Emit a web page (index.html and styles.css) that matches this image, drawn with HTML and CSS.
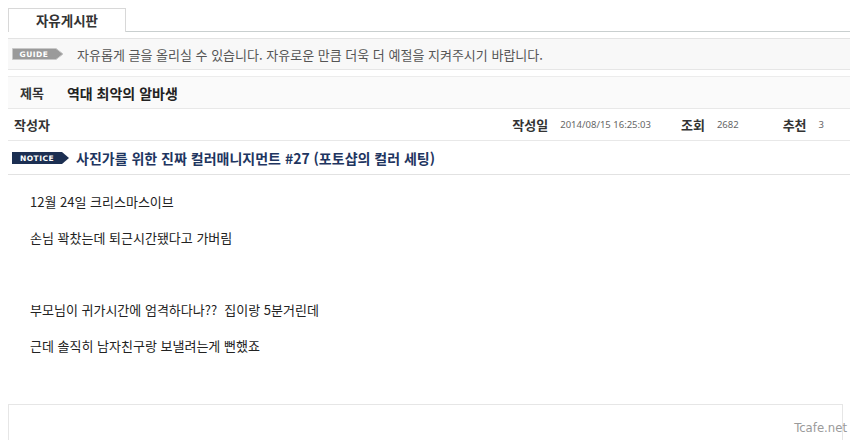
FILE: index.html
```html
<!DOCTYPE html>
<html lang="ko">
<head>
  <meta charset="UTF-8">
  <title>자유게시판</title>
  <link rel="stylesheet" href="styles.css">
</head>
<body>

  <!-- 탭 -->
  <div class="tabs">
    <div class="tab">자유게시판</div>
    <div class="tab-rest"></div>
  </div>

  <!-- 안내 -->
  <div class="guide">
    <svg class="badge" width="52" height="12" viewBox="0 0 52 12">
      <polygon points="0.5,0.5 44,0.5 51,6 44,11.5 0.5,11.5" fill="#9a9a9a" stroke="#c8c8c8"/>
      <text x="22" y="9" text-anchor="middle" fill="#fff" font-family="DejaVu Sans, sans-serif" font-size="7.5" font-weight="bold" letter-spacing="0.5">GUIDE</text>
    </svg>
    <span>자유롭게 글을 올리실 수 있습니다. 자유로운 만큼 더욱 더 예절을 지켜주시기 바랍니다.</span>
  </div>

  <!-- 글 정보 -->
  <div class="row title-row">
    <span class="label">제목</span>
    <span class="subject">역대 최악의 알바생</span>
  </div>

  <div class="row info-row">
    <span class="label">작성자</span>
    <div class="meta">
      <span class="label">작성일</span><span class="val date">2014/08/15 16:25:03</span>
      <span class="label">조회</span><span class="val hits">2682</span>
      <span class="label">추천</span><span class="val">3</span>
    </div>
  </div>

  <div class="row notice-row">
    <svg class="badge" width="58" height="12" viewBox="0 0 58 12">
      <polygon points="0,0 50,0 57,6 50,12 0,12" fill="#1c2f52"/>
      <text x="25" y="9" text-anchor="middle" fill="#fff" font-family="DejaVu Sans, sans-serif" font-size="7.5" font-weight="bold" letter-spacing="0.5">NOTICE</text>
    </svg>
    <a class="notice-link" href="#">사진가를 위한 진짜 컬러매니지먼트 #27 (포토샵의 컬러 세팅)</a>
  </div>

  <!-- 본문 -->
  <div class="content">
    <p>12월 24일 크리스마스이브</p>
    <p>손님 꽉찼는데 퇴근시간됐다고 가버림</p>
    <p>&nbsp;</p>
    <p>부모님이 귀가시간에 엄격하다나??&nbsp; 집이랑 5분거린데</p>
    <p>근데 솔직히 남자친구랑 보낼려는게 뻔했죠</p>
  </div>

  <div class="comment-box"></div>

  <div class="watermark">Tcafe.net</div>

</body>
</html>
```

FILE: styles.css
```css
body {
  margin: 0;
  padding: 8px 0 0 8px;
  font-family: "Noto Sans CJK KR", "Noto Sans", sans-serif;
  font-size: 13px;
  color: #222;
  background: #fff;
  overflow: hidden;
  height: 440px;
  box-sizing: border-box;
  position: relative;
}

/* Tabs */
.tabs {
  display: flex;
  height: 24px;
}

.tab {
  width: 116px;
  border: 1px solid #d8d8d8;
  border-bottom: none;
  text-align: center;
  font-weight: bold;
  font-size: 13.5px;
  line-height: 22px;
  color: #333;
}

.tab-rest {
  flex: 1;
  border-bottom: 1px solid #c9cfcf;
}

/* Guide */
.guide {
  display: flex;
  align-items: center;
  gap: 13px;
  margin-top: 6px;
  height: 30px;
  padding-left: 4px;
  background: #f8f8f8;
  border-top: 1px solid #e3e3e3;
  border-bottom: 1px solid #e6e6e6;
  color: #555;
}

.badge {
  display: block;
  flex: none;
}

/* Rows */
.row {
  display: flex;
  align-items: center;
  border-bottom: 1px solid #e8e8e8;
}

.label {
  font-weight: bold;
  color: #333;
}

.title-row {
  margin-top: 6px;
  height: 31px;
  padding-left: 12px;
  background: #fafafa;
  border-top: 1px solid #ececec;
}

.title-row .subject {
  margin-left: 23px;
  font-weight: bold;
  font-size: 14px;
  color: #222;
}

.info-row {
  height: 31px;
  padding-left: 6px;
}

.meta {
  margin-left: auto;
  display: flex;
  align-items: center;
}

.meta .val {
  font-family: "Noto Sans", sans-serif;
  font-size: 9.5px;
  color: #666;
  margin-left: 12px;
}

.meta .date { margin-right: 30px; }
.meta .hits { margin-right: 44px; }
.meta .val:last-child { margin-right: 26px; }

.notice-row {
  height: 33px;
  padding-left: 4px;
  gap: 6px;
  border-bottom: 1px solid #e2e2e2;
}

.notice-link {
  font-weight: bold;
  font-size: 14px;
  color: #1e3560;
  text-decoration: none;
}

/* Content */
.content {
  padding: 17px 0 0 22px;
  height: 212px;
}

.content p {
  margin: 0;
  height: 36px;
  line-height: 20px;
}

.comment-box {
  margin-right: 7px;
  height: 40px;
  border: 1px solid #e6e6e6;
  border-bottom: none;
}

.watermark {
  position: absolute;
  right: 3px;
  bottom: 5px;
  font-family: "Liberation Sans Narrow", "DejaVu Sans Condensed", sans-serif;
  font-size: 13px;
  color: #9a9a9a;
}
```
